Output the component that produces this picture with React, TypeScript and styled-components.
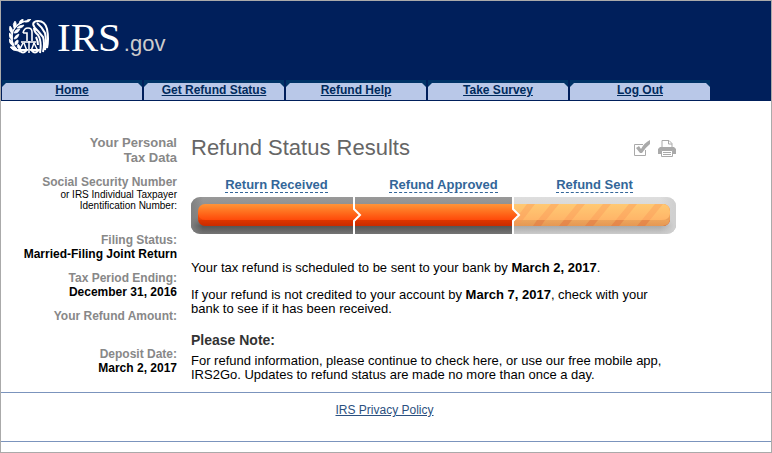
import React from "react";
import styled, { createGlobalStyle } from "styled-components";

const sans = `"Liberation Sans", Arial, Helvetica, sans-serif`;

const GlobalStyle = createGlobalStyle`
  *, *::before, *::after { box-sizing: border-box; }
  body { margin: 0; background: #fff; color: #000; font-family: ${sans}; }
`;

const Page = styled.div`
  min-height: 100vh;
  display: flex;
  flex-direction: column;
  border: 1px solid #aaa;
  background: #fff;
`;

const Header = styled.header`
  background: #001f5b;
`;

const Brand = styled.a`
  display: flex;
  align-items: center;
  gap: 8px;
  height: 79px;
  padding: 0 8px 8px;
  color: #fff;
  text-decoration: none;
`;

const Wordmark = styled.span`
  font: 41px/48px "Liberation Serif", "Times New Roman", serif;
`;

const Domain = styled.span`
  margin-left: 3px;
  color: #ccc;
  font: 22px/24px ${sans};
`;

const TabList = styled.nav`
  display: flex;
  gap: 2px;
  padding: 0 61px 1px 1px;
`;

const Tab = styled.div`
  flex: 1;
  padding-top: 3px;
  background: #003366;
`;

const TabLink = styled.a`
  display: block;
  height: 17px;
  background: #b9c8e8;
  clip-path: polygon(4px 0, calc(100% - 4px) 0, 100% 4px, 100% 100%, 0 100%, 0 4px);
  color: #002a5c;
  font-size: 12px;
  line-height: 14px;
  font-weight: 700;
  text-align: center;
`;

const Content = styled.div`
  display: grid;
  grid-template-columns: 176px minmax(0, 485px);
  column-gap: 14px;
  padding: 34px 16px 10px 0;
`;

const Sidebar = styled.aside`
  text-align: right;
  font-size: 12px;
  line-height: 14px;
  font-weight: 700;
`;

const SidebarTitle = styled.h2`
  margin: 0 0 10px;
  color: #888;
  font-size: 13px;
  line-height: 15px;
`;

const Facts = styled.dl`
  margin: 0;
`;

const Fact = styled.div<{ $space?: number }>`
  margin-bottom: ${(p) => p.$space ?? 10}px;
`;

const Term = styled.dt`
  color: #888;
`;

const TermDetail = styled.span`
  display: block;
  color: #000;
  font-size: 10px;
  line-height: 11px;
  font-weight: 400;
`;

const Value = styled.dd`
  margin: 0;
`;

const Main = styled.main`
  font-size: 13px;
  line-height: 14px;
`;

const TitleRow = styled.div`
  display: flex;
  align-items: center;
  justify-content: space-between;
`;

const Title = styled.h1`
  margin: 0;
  color: #666;
  font-size: 22px;
  line-height: 26px;
  font-weight: 400;
`;

const Tools = styled.div`
  display: flex;
  gap: 7px;
`;

const ToolButton = styled.button`
  display: flex;
  padding: 0;
  border: 0;
  background: none;
  cursor: pointer;
`;

const Steps = styled.div`
  display: grid;
  grid-template-columns: 171fr 163fr 139fr;
  justify-items: center;
  margin: 16px 12px 4px 0;
`;

const Step = styled.a`
  border-bottom: 1px dashed #369;
  color: #369;
  font-size: 13px;
  line-height: 15px;
  font-weight: 700;
  text-decoration: none;
`;

const Meter = styled.svg`
  display: block;
  width: 100%;
  height: auto;
`;

const Messages = styled.section`
  padding-top: 27px;
`;

const Message = styled.p`
  margin: 0 0 13px;
`;

const NoteTitle = styled.h3`
  margin: 0 0 6px;
  padding-top: 3px;
  color: #333;
  font-size: 14px;
  line-height: 16px;
`;

const Note = styled.p`
  margin: 0;
`;

const Footer = styled.footer`
  height: 50px;
  padding: 10px 3px 0 0;
  border-top: 1px solid #7b94bd;
  border-bottom: 1px solid #7b94bd;
  text-align: center;
  font-size: 12px;
  line-height: 14px;
`;

const FooterLink = styled.a`
  color: #2b5080;
`;

const EagleLogo = () => (
  <svg width="40" height="36" viewBox="0 0 40 36" aria-hidden="true">
    <g fill="#fff" stroke="#fff" strokeWidth=".7">
      <path d="M10 5Q10 1 14 0Q15 4 10 5ZM16 3Q18 0 22 0Q20 4 16 3ZM5 9Q3 5 6 2Q9 6 5 9ZM8 9Q10 6 15 6Q13 10 8 9ZM3 15Q-1 11 1 7Q5 10 3 15ZM5 14Q6 10 11 10Q9 15 5 14ZM3 21Q-1 18 0 14Q5 16 3 21ZM5 20Q6 16 10 15Q9 20 5 20ZM4 27Q0 25 0 20Q5 22 4 27ZM6 26Q5 22 9 21Q10 25 6 26ZM9 32Q3 32 1 28Q7 26 9 32ZM10 30Q7 28 9 25Q13 28 10 30Z" />
    </g>
    <g fill="none" stroke="#fff">
      <path strokeWidth="1.4" d="M11 33Q0 26 4 12Q8 4 17 2" />
      <path strokeWidth="1.6" d="M14 14Q15 9 19 9Q23 9 23 13V22M14 14H18V22" />
      <path strokeWidth="2" d="M24 5Q25 2 29 2Q36 2 38 10Q40 20 38 29M24 5Q25 9 29 12L34 18Q36 24 34 33M28 4Q33 8 36 14Q38 23 36 31M25 9Q25 13 29 16Q33 22 31 34M27 18Q29 22 29 26" />
      <path strokeWidth="1.5" d="M20 22V34M12 23H27M14 24L10 32M15 24L18 32M25 24L22 32M25 24L29 32" />
      <path strokeWidth="1.8" d="M10 31Q14 36 18 31ZM22 31Q26 36 30 31Z" />
    </g>
  </svg>
);

const CheckIcon = () => (
  <svg width="17" height="17" viewBox="0 0 17 17" aria-hidden="true">
    <path d="M11.5 10V15.5H.5V4.5H9" fill="none" stroke="#aaa" />
    <path d="M2 8L5 6L7 9Q10 3 16 0V4Q11 8 8 13H6Z" fill="#aaa" />
  </svg>
);

const PrintIcon = () => (
  <svg width="18" height="17" viewBox="0 0 18 17" aria-hidden="true">
    <path d="M4 7V.5H11L14 3.5V7M10.5 .5V4H14" fill="none" stroke="#aaa" />
    <path d="M2 7H16L18 9V14H14V10H4V14H0V9Z" fill="#aaa" />
    <path d="M3.5 10.5H14.5V16.5H3.5Z" fill="#fff" stroke="#aaa" />
    <path d="M5 12.5H13M5 14.5H13" stroke="#aaa" />
  </svg>
);

const StatusMeter = () => (
  <Meter viewBox="0 0 485 37" role="img" aria-label="Refund approved, not yet sent">
    <defs>
      <linearGradient id="done" x2="0" y2="1">
        <stop offset="0" stopColor="#ff9438" />
        <stop offset=".35" stopColor="#ff701f" />
        <stop offset=".72" stopColor="#ff4a0a" />
        <stop offset=".74" stopColor="#dc3500" />
        <stop offset="1" stopColor="#c92b00" />
      </linearGradient>
      <linearGradient id="pending" x2="0" y2="1">
        <stop offset="0" stopColor="#ffc973" />
        <stop offset=".72" stopColor="#ffb568" />
        <stop offset=".74" stopColor="#eca45c" />
        <stop offset="1" stopColor="#e59854" />
      </linearGradient>
      <linearGradient id="track" x2="0" y2="1">
        <stop offset="0" stopColor="#999" />
        <stop offset=".55" stopColor="#858585" />
        <stop offset=".78" stopColor="#555" />
        <stop offset="1" stopColor="#747474" />
      </linearGradient>
      <linearGradient id="trackPending" x2="0" y2="1">
        <stop offset="0" stopColor="#dedede" />
        <stop offset=".6" stopColor="#d0d0d0" />
        <stop offset=".78" stopColor="#aaa" />
        <stop offset="1" stopColor="#cbcbcb" />
      </linearGradient>
      <linearGradient id="edge" x2="1" y2="0">
        <stop offset="0" stopColor="#808080" />
        <stop offset="1" stopColor="#808080" stopOpacity="0" />
      </linearGradient>
      <linearGradient id="edgePending" x2="1" y2="0">
        <stop offset="0" stopColor="#d0d0d0" stopOpacity="0" />
        <stop offset="1" stopColor="#d0d0d0" />
      </linearGradient>
      <clipPath id="trackShape"><rect width="485" height="37" rx="9" /></clipPath>
      <clipPath id="fillShape"><rect x="7" y="7" width="472" height="22" rx="7" /></clipPath>
    </defs>
    <g clipPath="url(#trackShape)">
      <rect width="323" height="37" fill="url(#track)" />
      <rect width="12" height="37" fill="url(#edge)" />
      <rect x="323" width="162" height="37" fill="url(#trackPending)" />
      <rect x="469" width="14" height="37" fill="url(#edgePending)" />
      <rect x="483" width="2" height="37" fill="#d0d0d0" />
    </g>
    <g clipPath="url(#fillShape)">
      <rect x="7" y="7" width="472" height="22" fill="url(#done)" />
      <path d="M323 7H479V29H323V22L328 18L323 14Z" fill="url(#pending)" />
      <path
        d="M330 15L336 7H344L327 29H323V23ZM360 7H368L350 29H342ZM386 7H394L376 29H368ZM412 7H420L402 29H394ZM438 7H446L428 29H420ZM464 7H472L454 29H446Z"
        fill="#fb9656" fillOpacity=".38"
      />
      <path
        d="M346 23H354L350 29H342ZM373 23H381L376 29H368ZM399 23H407L402 29H394ZM425 23H433L428 29H420ZM451 23H459L454 29H446Z"
        fill="#d56d3b" fillOpacity=".38"
      />
      <path d="M7 17Q8 23 15 23H7Z" fill="#cc3500" fillOpacity=".4" />
      <path d="M479 17Q478 23 471 23H479Z" fill="#e59854" fillOpacity=".8" />
    </g>
    <path d="M163 0V12L169 18L163 24V37M322 0V12L328 18L322 24V37" fill="none" stroke="#fff" strokeWidth="2" />
  </Meter>
);

const tabs = ["Home", "Get Refund Status", "Refund Help", "Take Survey", "Log Out"];
const steps = ["Return Received", "Refund Approved", "Refund Sent"];

export default function App() {
  return (
    <Page>
      <GlobalStyle />
      <Header>
        <Brand href="#">
          <EagleLogo />
          <span>
            <Wordmark>IRS</Wordmark>
            <Domain>.gov</Domain>
          </span>
        </Brand>
        <TabList>
          {tabs.map((tab) => (
            <Tab key={tab}><TabLink href="#">{tab}</TabLink></Tab>
          ))}
        </TabList>
      </Header>
      <Content>
        <Sidebar>
          <SidebarTitle>Your Personal<br />Tax Data</SidebarTitle>
          <Facts>
            <Fact $space={22}>
              <Term>
                Social Security Number
                <TermDetail>or IRS Individual Taxpayer<br />Identification Number:</TermDetail>
              </Term>
            </Fact>
            <Fact>
              <Term>Filing Status:</Term>
              <Value>Married-Filing Joint Return</Value>
            </Fact>
            <Fact>
              <Term>Tax Period Ending:</Term>
              <Value>December 31, 2016</Value>
            </Fact>
            <Fact $space={24}>
              <Term>Your Refund Amount:</Term>
            </Fact>
            <Fact $space={0}>
              <Term>Deposit Date:</Term>
              <Value>March 2, 2017</Value>
            </Fact>
          </Facts>
        </Sidebar>
        <Main>
          <TitleRow>
            <Title>Refund Status Results</Title>
            <Tools>
              <ToolButton aria-label="Select"><CheckIcon /></ToolButton>
              <ToolButton aria-label="Print"><PrintIcon /></ToolButton>
            </Tools>
          </TitleRow>
          <Steps>
            {steps.map((step) => <Step key={step} href="#">{step}</Step>)}
          </Steps>
          <StatusMeter />
          <Messages>
            <Message>
              Your tax refund is scheduled to be sent to your bank by <b>March 2, 2017</b>.
            </Message>
            <Message>
              If your refund is not credited to your account by <b>March 7, 2017</b>, check with your bank to see if it has been received.
            </Message>
            <NoteTitle>Please Note:</NoteTitle>
            <Note>
              For refund information, please continue to check here, or use our free mobile app, IRS2Go. Updates to refund status are made no more than once a day.
            </Note>
          </Messages>
        </Main>
      </Content>
      <Footer><FooterLink href="#">IRS Privacy Policy</FooterLink></Footer>
    </Page>
  );
}
